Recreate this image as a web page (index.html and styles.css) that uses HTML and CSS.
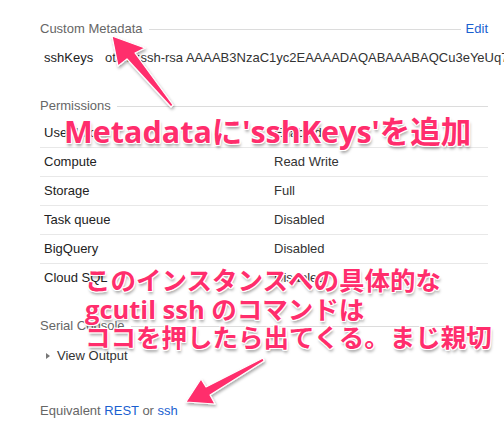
FILE: index.html
```html
<!DOCTYPE html>
<html lang="ja">
<head>
<meta charset="utf-8">
<title>Instance details</title>
<link rel="stylesheet" href="styles.css">
</head>
<body>
<div class="page">
  <section class="section">
    <div class="sec-head">
      <span class="sec-title">Custom Metadata</span>
      <span class="rule"></span>
      <a class="link edit">Edit</a>
    </div>
    <div class="meta-row">
      <span class="meta-key">sshKeys</span>
      <span class="meta-val">otaku:ssh-rsa AAAAB3NzaC1yc2EAAAADAQABAAABAQCu3eYeUq7vXk2L9pQ</span>
    </div>
  </section>

  <section class="section perms">
    <div class="sec-head">
      <span class="sec-title">Permissions</span>
      <span class="rule"></span>
    </div>
    <div class="table">
      <div class="row"><span class="c1">User Info</span><span class="c2">Enabled</span></div>
      <div class="row"><span class="c1">Compute</span><span class="c2">Read Write</span></div>
      <div class="row"><span class="c1">Storage</span><span class="c2">Full</span></div>
      <div class="row"><span class="c1">Task queue</span><span class="c2">Disabled</span></div>
      <div class="row"><span class="c1">BigQuery</span><span class="c2">Disabled</span></div>
      <div class="row"><span class="c1">Cloud SQL</span><span class="c2">Disabled</span></div>
    </div>
  </section>

  <section class="section serial">
    <div class="sec-head">
      <span class="sec-title">Serial Console</span>
      <span class="rule"></span>
    </div>
    <div class="view"><span class="tri"></span><span>View Output</span></div>
  </section>

  <div class="equiv">Equivalent <a class="link">REST</a> or <a class="link">ssh</a></div>

  <svg class="arrows" width="504" height="439" viewBox="0 0 504 439">
    <defs>
      <filter id="sh" x="-20%" y="-20%" width="140%" height="140%">
        <feDropShadow dx="1" dy="2" stdDeviation="1.5" flood-color="#000" flood-opacity="0.35"/>
      </filter>
    </defs>
    <polygon filter="url(#sh)" class="arrow" points="112,36 145,48 135,53 173,105 171,107 127,59 118,66"/>
    <polygon filter="url(#sh)" class="arrow" points="186,402 201,379 206,387 263,358 264,361 210,395 215,404"/>
  </svg>

  <div class="annot annot-1">Metadataに'sshKeys'を追加</div>
  <div class="annot annot-2">このインスタンスへの具体的な<br>gcutil ssh のコマンドは<br>ココを押したら出てくる。まじ親切</div>
</div>
</body>
</html>
```

FILE: styles.css
```css
html, body {
  margin: 0;
  padding: 0;
  overflow: hidden;
  background: #fff;
}
body {
  font-family: "Liberation Sans", Arial, sans-serif;
  font-size: 13px;
  line-height: 16px;
  color: #222;
}
.page {
  position: relative;
  width: 504px;
  height: 439px;
  box-sizing: border-box;
  padding: 21px 16px 0 40px;
  overflow: hidden;
}
.sec-head {
  display: flex;
  align-items: center;
  height: 16px;
  color: #666;
}
.rule {
  flex: 1;
  border-top: 1px solid #dcdcdc;
  margin-left: 6px;
}
.link {
  color: #1a5fd0;
  text-decoration: none;
}
.edit {
  margin-left: 5px;
}
.meta-row {
  display: flex;
  margin-top: 13px;
  padding-left: 4px;
  white-space: nowrap;
}
.meta-key {
  width: 61px;
  flex: none;
}
.meta-val {
  color: #333;
}
.perms {
  margin-top: 32px;
}
.table {
  margin-top: 5px;
}
.row {
  display: flex;
  align-items: center;
  height: 28px;
  border-bottom: 1px solid #e8e8e8;
}
.row:last-child {
  border-bottom: none;
}
.c1 {
  width: 234px;
  padding-left: 4px;
  box-sizing: border-box;
}
.c2 {
  color: #333;
}
.serial {
  margin-top: 26px;
}
.view {
  display: flex;
  align-items: center;
  margin-top: 14px;
  padding-left: 6px;
  color: #333;
}
.tri {
  width: 0;
  height: 0;
  border-left: 4px solid #777;
  border-top: 3.5px solid transparent;
  border-bottom: 3.5px solid transparent;
  margin-right: 7px;
}
.equiv {
  margin-top: 39px;
  color: #666;
}
.arrows {
  position: absolute;
  left: 0;
  top: 0;
}
.arrow {
  fill: #ff2d6c;
  stroke: #fff;
  stroke-width: 1.2;
  stroke-linejoin: round;
}
.annot {
  position: absolute;
  font-family: "Open Sans", "Noto Sans CJK JP", sans-serif;
  font-weight: 700;
  color: #ff2d6c;
  white-space: nowrap;
  text-shadow:
    1px 0 0 #fff, -1px 0 0 #fff, 0 1px 0 #fff, 0 -1px 0 #fff,
    1px 1px 0 #fff, -1px -1px 0 #fff, 1px -1px 0 #fff, -1px 1px 0 #fff,
    1px 3px 3px rgba(0, 0, 0, 0.35);
}
.annot-1 {
  left: 64px;
  top: 111px;
  font-size: 30.5px;
  line-height: 40px;
}
.annot-2 {
  left: 85px;
  top: 266px;
  font-size: 25.5px;
  line-height: 28.5px;
}
```
